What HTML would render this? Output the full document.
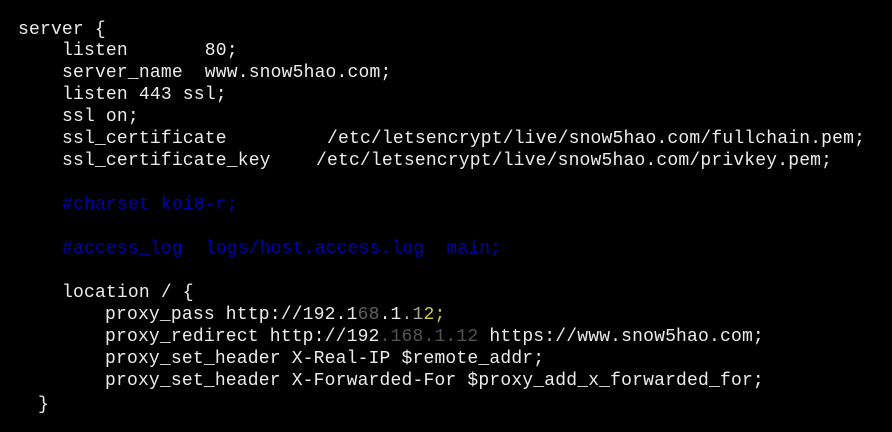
<!DOCTYPE html>
<html><head><style>
body{margin:0;width:892px;height:432px;background:#000;overflow:hidden;position:relative;font-family:"Liberation Mono",monospace;font-size:18px;color:#ececec;letter-spacing:0.18px}
div{position:absolute;white-space:pre;line-height:22px;height:22px}
.c{color:#0000b4}
</style></head><body>
<div style="left:18px;top:19px">server {</div>
<div style="left:62px;top:40px">listen       80;</div>
<div style="left:62px;top:62px">server_name  www.snow5hao.com;</div>
<div style="left:62px;top:84px">listen 443 ssl;</div>
<div style="left:62px;top:106px">ssl on;</div>
<div style="left:62px;top:128px">ssl_certificate</div><div style="left:327px;top:128px">/etc/letsencrypt/live/snow5hao.com/fullchain.pem;</div>
<div style="left:62px;top:150px">ssl_certificate_key</div><div style="left:316px;top:150px">/etc/letsencrypt/live/snow5hao.com/privkey.pem;</div>
<div class="c" style="left:62px;top:194px">#charset koi8-r;</div>
<div class="c" style="left:62px;top:238px">#access_log  logs/host.access.log  main;</div>
<div style="left:62px;top:282px">location / {</div>
<div style="left:105px;top:304px">proxy_pass http://192.1<span style="opacity:.4">68</span>.1<span style="color:#aa9">.1</span><span style="color:#cc4">2;</span></div>
<div style="left:105px;top:326px">proxy_redirect http://192<span style="opacity:.35">.168.1.12</span> https://www.snow5hao.com;</div>
<div style="left:105px;top:348px">proxy_set_header X-Real-IP $remote_addr;</div>
<div style="left:105px;top:370px">proxy_set_header X-Forwarded-For $proxy_add_x_forwarded_for;</div>
<div style="left:38px;top:394px">}</div>
</body></html>
